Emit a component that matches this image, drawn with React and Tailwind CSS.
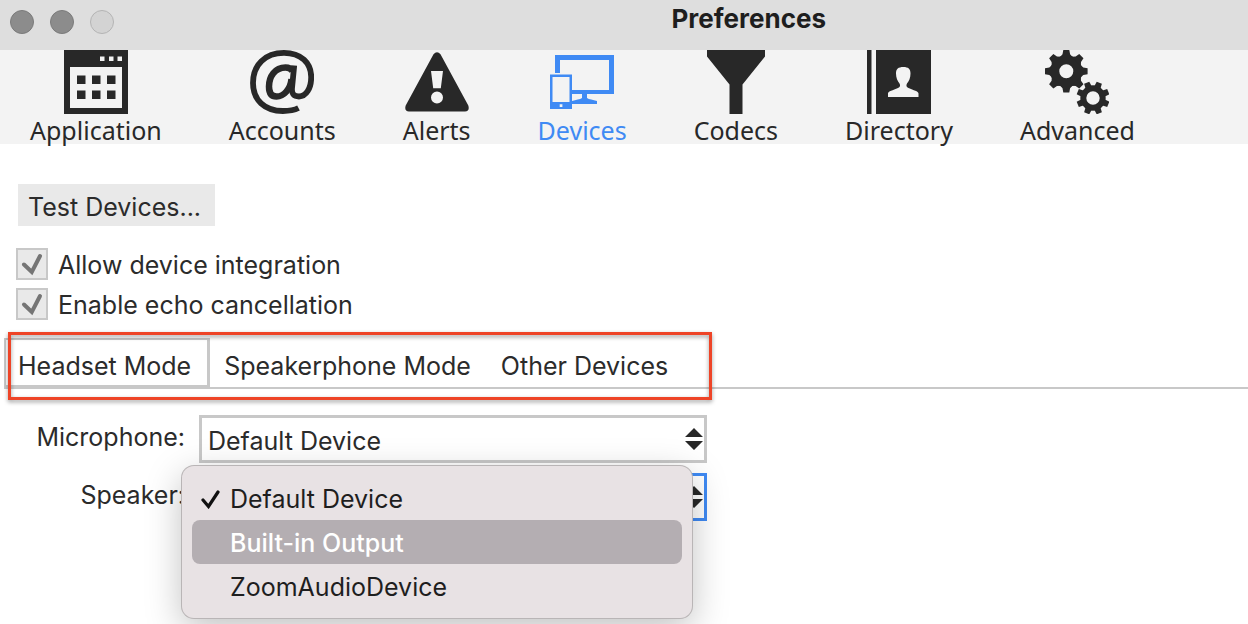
const ink = "#282828";

function Teeth({ cx, cy, count, offset, points }) {
  return Array.from({ length: count }, (_, i) => (
    <polygon
      key={i}
      points={points}
      transform={`translate(${cx} ${cy}) rotate(${offset + (i * 360) / count})`}
    />
  ));
}

function ApplicationIcon() {
  return (
    <svg viewBox="0 0 64 64" className="size-16 shrink-0" fill="currentColor" aria-hidden="true">
      <path fillRule="evenodd" d="M0 0h64v64H0zM6 17v41h52V17zM36 6.500v4.500h4.500v-4.500zM45 6.500v4.500h4.500v-4.500zM53.500 6.500v4.500h4.500v-4.500z" />
      <path d="M13 25.500h8.500v8.500H13zM28 25.500h8.500v8.500H28zM43 25.500h8.500v8.500H43zM13 40.500h8.500v8.500H13zM28 40.500h8.500v8.500H28zM43 40.500h8.500v8.500H43z" />
    </svg>
  );
}

function AccountsIcon() {
  return (
    <svg viewBox="0 0 64 64" className="size-16 shrink-0" fill="none" stroke="currentColor" aria-hidden="true">
      <path strokeWidth="5.800" d="M48.500 58C44 60.300 39 61 33 61C14.500 61 3 50 3 33C3 15 15 2.900 34 2.900C51 2.900 61.200 13 61.200 27C61.200 38.500 56 46.500 49 46.500C43.500 46.500 41.500 43.500 42 38L44.200 15.500" />
      <path strokeWidth="6.500" d="M42.500 21C41 18.500 38.500 17.500 35.500 17.500C25 17.500 19 26.500 19 36.500C19 43 21.500 46.500 26.500 46.500C34 46.500 40.500 39 41.500 29" />
    </svg>
  );
}

function AlertsIcon() {
  return (
    <svg viewBox="0 0 64 64" className="size-16 shrink-0" fill="currentColor" aria-hidden="true">
      <path fillRule="evenodd" d="M28.500 4.200Q32 .2 35.500 4.200L63.300 55.500Q65 61 60 61.500H4Q-1 61 .7 55.500ZM26 21l2.200 17.300h7.600L38 21zM32 41.500a6 6 0 1 0 0 12a6 6 0 1 0 0-12z" />
    </svg>
  );
}

function DevicesIcon() {
  return (
    <svg viewBox="0 0 64 64" className="size-16 shrink-0" fill="currentColor" aria-hidden="true">
      <path d="M5 5h59v39H22v-4h37V10H10v13H5z" />
      <path d="M32 44h5v4c2 1.700 6 1.500 10 3v3H22v-3c4-1.500 8-1.300 10-3z" />
      <path fillRule="evenodd" d="M0 24.500h22V59H0zM2.500 27v25h17V27zM9.700 54.300v2.700h2.700v-2.700z" />
    </svg>
  );
}

function CodecsIcon() {
  return (
    <svg viewBox="0 0 64 64" className="size-16 shrink-0" fill="currentColor" aria-hidden="true">
      <path d="M3 0h58v6.500L38.500 34.500V64h-13V34.500L3 6.500z" />
    </svg>
  );
}

function DirectoryIcon() {
  return (
    <svg viewBox="0 0 64 64" className="size-16 shrink-0" fill="currentColor" aria-hidden="true">
      <path d="M0 0h4.500v64H0z" />
      <path fillRule="evenodd" d="M9 0h55v64H9zM36.300 17c-5 0-7.300 2-7.300 6.500c0 4.500 1.500 7.500 3.500 10c1.200 2.500 .5 3.500-1.500 4.500c-5 2.500-10 3-10 5.500v3.500h30.500v-3.500c0-2.500-5-3-10-5.500c-2-1-2.700-2-1.500-4.500c2-2.500 3.500-5.500 3.500-10c0-4.500-2.200-6.500-7.200-6.500z" />
    </svg>
  );
}

function AdvancedIcon() {
  return (
    <svg viewBox="0 0 64 64" className="size-16 shrink-0" fill="currentColor" aria-hidden="true">
      <circle cx="21.300" cy="21.300" r="11.500" fill="none" stroke="currentColor" strokeWidth="9" />
      <Teeth cx={21.3} cy={21.3} count={8} offset={0} points="-6.500,-14 -3.800,-17 -3,-21.300 3,-21.300 3.800,-17 6.500,-14" />
      <circle cx="48" cy="48" r="9.700" fill="none" stroke="currentColor" strokeWidth="6" />
      <Teeth cx={48} cy={48} count={8} offset={22.5} points="-3.300,-11 -2.800,-16.500 2.800,-16.500 3.300,-11" />
    </svg>
  );
}

const sections = [
  { name: "Application", Icon: ApplicationIcon },
  { name: "Accounts", Icon: AccountsIcon },
  { name: "Alerts", Icon: AlertsIcon },
  { name: "Devices", Icon: DevicesIcon },
  { name: "Codecs", Icon: CodecsIcon },
  { name: "Directory", Icon: DirectoryIcon },
  { name: "Advanced", Icon: AdvancedIcon },
];

function Option({ id, children }) {
  return (
    <div className="flex h-8 items-center gap-2.5">
      <span className="relative flex size-8">
        <input id={id} type="checkbox" defaultChecked className="peer size-8 appearance-none border-2 border-[#c8c8c8] bg-[#e9e9e9]" />
        <svg viewBox="0 0 32 32" className="pointer-events-none absolute inset-0 hidden size-8 peer-checked:block" fill="none" stroke="#757575" strokeWidth="4" strokeLinecap="round" aria-hidden="true">
          <path d="M8 16.500L15.800 24L24 8" />
        </svg>
      </span>
      <label htmlFor={id} className="pt-0.5">{children}</label>
    </div>
  );
}

function DeviceSelect({ id, label, active }) {
  return (
    <div className="flex items-start gap-3.5">
      <label htmlFor={id} className="w-[185px] pt-1.5 text-right">{label}</label>
      <div className="relative w-[508px]">
        <select
          id={id}
          className={`block h-12 w-full appearance-none border-[3px] bg-white px-1.5 pt-1 outline-none ${active ? "border-[#3f8af4]" : "border-[#c8c8c8]"}`}
        >
          <option>Default Device</option>
          <option>Built-in Output</option>
          <option>ZoomAudioDevice</option>
        </select>
        <svg viewBox="0 0 18 22" className="pointer-events-none absolute top-[13px] right-1 h-[22px] w-[18px]" fill={ink} aria-hidden="true">
          <path d="M0 9L9 0L18 9zM0 13h18L9 22z" />
        </svg>
      </div>
    </div>
  );
}

export default function App() {
  return (
    <div className="min-h-screen overflow-hidden bg-white font-['Inter','Liberation_Sans',sans-serif] text-[25px] leading-8 text-[#2b2b2b]">
      <header className="flex h-[50px] bg-[#dedede] px-2.5">
        <div className="flex flex-1 gap-4 pt-2.5">
          <button aria-label="Close" className="size-6 rounded-full border border-[#7b7b7b] bg-[#8c8c8c]" />
          <button aria-label="Minimize" className="size-6 rounded-full border border-[#7b7b7b] bg-[#8c8c8c]" />
          <button aria-label="Zoom" className="size-6 rounded-full border border-[#b4b4b4] bg-[#d3d3d3]" />
        </div>
        <h1 className="text-[26px] leading-[38px] font-bold text-[#1e1e1e]">Preferences</h1>
        <div className="w-[412px]" />
      </header>

      <nav className="flex h-[94px] gap-[67px] bg-[#f3f3f3] px-[30px] font-['Noto_Sans','Open_Sans',sans-serif] text-[25px]">
        {sections.map(({ name, Icon }) => (
          <button
            key={name}
            className={`flex flex-col items-center ${name === "Devices" ? "text-[#3f8af4]" : "text-[#282828]"}`}
          >
            <Icon />
            <span>{name}</span>
          </button>
        ))}
      </nav>

      <main>
        <div className="flex flex-col items-start px-4 pt-10">
          <button className="ml-0.5 h-[42px] bg-[#e9e9e9] pt-1 pr-3.5 pl-2.5">Test Devices...</button>
          <div className="mt-[22px] flex flex-col gap-2">
            <Option id="integration">Allow device integration</Option>
            <Option id="echo">Enable echo cancellation</Option>
          </div>
        </div>

        <div className="relative mt-[18px] pl-1">
          <div role="tablist" className="flex h-[51px] items-stretch border-b-2 border-[#c8c8c8]">
            <button role="tab" aria-selected="true" className="-mb-0.5 border-2 border-r-[3px] border-b-4 border-[#c8c8c8] pt-1.5 pr-4 pl-3">Headset Mode</button>
            <button role="tab" aria-selected="false" className="pt-1.5 pr-4 pl-3.5">Speakerphone Mode</button>
            <button role="tab" aria-selected="false" className="pt-1.5 pr-4 pl-3.5">Other Devices</button>
          </div>
          <div className="pointer-events-none absolute -top-1.5 left-2 h-[68px] w-[704px] border-[3px] border-[#ee4427] drop-shadow-[0_2px_2px_rgba(0,0,0,0.4)]" />
        </div>

        <div className="relative mt-[26px] flex flex-col gap-2.5">
          <DeviceSelect id="microphone" label="Microphone:" />
          <DeviceSelect id="speaker" label="Speaker:" active />
          <ul
            role="listbox"
            aria-label="Speaker"
            className="absolute top-[51px] left-[182px] w-[510px] rounded-xl bg-[#e8e2e4] p-2.5 text-[#1e1e1e] shadow-[0_0_0_1px_#b9b5b6,0_10px_36px_rgba(0,0,0,0.25)]"
          >
            <li role="option" aria-selected="true" className="flex h-11 items-center gap-2.5 pt-0.5 pl-2">
              <svg viewBox="0 0 20 20" className="size-5" fill="none" stroke="#111" strokeWidth="3.200" strokeLinecap="round" aria-hidden="true">
                <path d="M3 11L8.500 17.500L18 3" />
              </svg>
              Default Device
            </li>
            <li role="option" aria-selected="false" className="flex h-11 items-center rounded-lg bg-[#b4aeb2] pt-0.5 pl-[38px] font-medium text-white">Built-in Output</li>
            <li role="option" aria-selected="false" className="flex h-11 items-center pt-0.5 pl-[38px]">ZoomAudioDevice</li>
          </ul>
        </div>
      </main>
    </div>
  );
}
